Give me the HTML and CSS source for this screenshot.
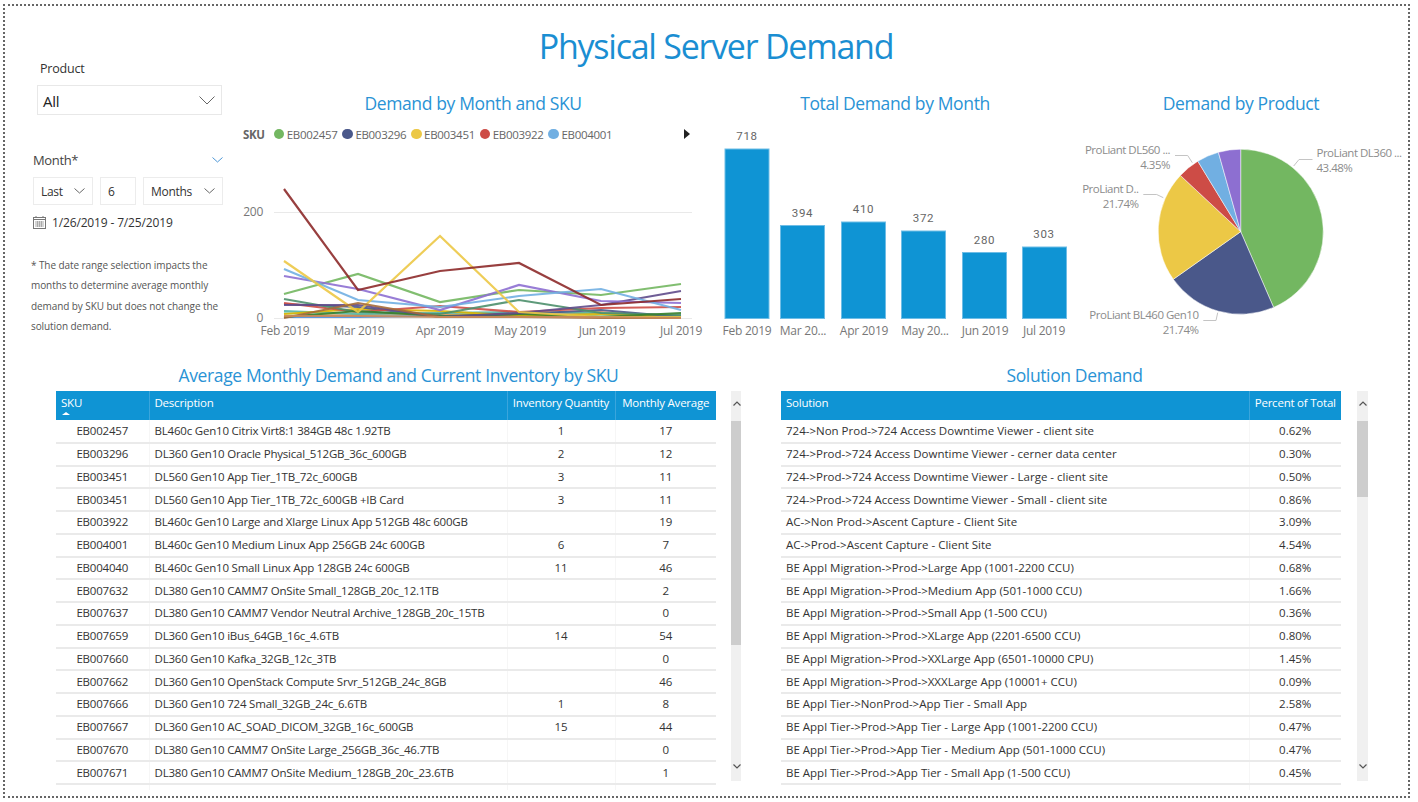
FILE: index.html
```html
<!DOCTYPE html>
<html lang="en">
<head>
    <meta charset="UTF-8">
    <meta name="viewport" content="width=device-width, initial-scale=1.0">
    <title>Physical Server Demand</title>
    <link rel="stylesheet" href="styles.css">
</head>
<body>
<div class="report">
    <div class="top">
        <div class="slicers">
            <div class="slicer-label">Product</div>
            <div class="dropdown">
                <span>All</span>
                <svg width="16" height="9" viewBox="0 0 16 9"><polyline points="0.5,0.5 8,8 15.5,0.5" class="chev"/></svg>
            </div>
            <div class="month-head">
                <span>Month*</span>
                <svg width="11" height="6" viewBox="0 0 11 6"><polyline points="0.5,0.5 5.5,5 10.5,0.5" class="chev-blue"/></svg>
            </div>
            <div class="month-inputs">
                <div class="box box-last"><span>Last</span><svg width="11" height="6" viewBox="0 0 11 6"><polyline points="0.5,0.5 5.5,5 10.5,0.5" class="chev"/></svg></div>
                <div class="box box-num"><span>6</span></div>
                <div class="box box-unit"><span>Months</span><svg width="11" height="6" viewBox="0 0 11 6"><polyline points="0.5,0.5 5.5,5 10.5,0.5" class="chev"/></svg></div>
            </div>
            <div class="date-range">
                <svg width="13" height="13" viewBox="0 0 13 13" class="cal">
                    <rect x="0.5" y="1.5" width="12" height="11" fill="none" stroke="#777"/>
                    <line x1="0.5" y1="3.5" x2="12.5" y2="3.5" stroke="#777"/>
                    <line x1="3" y1="0" x2="3" y2="2" stroke="#777"/>
                    <line x1="10" y1="0" x2="10" y2="2" stroke="#777"/>
                    <path d="M2 6h9M2 8h9M2 10h9M4.500 5v6M6.500 5v6M8.500 5v6" stroke="#aaa" fill="none"/>
                </svg>
                <span>1/26/2019 - 7/25/2019</span>
            </div>
            <p class="note">* The date range selection impacts the months to determine average monthly demand by SKU but does not change the solution demand.</p>
        </div>

        <div class="top-main">
            <h1>Physical Server Demand</h1>
            <div class="charts">
                <div class="chart chart-line">
                    <div class="chart-title">Demand by Month and SKU</div>
                    <div class="legend">
                        <b>SKU</b>
                        <div class="legend-item"><i class="dot dot-green"></i>EB002457</div>
                        <div class="legend-item"><i class="dot dot-navy"></i>EB003296</div>
                        <div class="legend-item"><i class="dot dot-yellow"></i>EB003451</div>
                        <div class="legend-item"><i class="dot dot-red"></i>EB003922</div>
                        <div class="legend-item"><i class="dot dot-blue"></i>EB004001</div>
                        <div class="legend-next"></div>
                    </div>
                    <svg class="plot" width="466" height="201" viewBox="240 144 466 201">
                        <line x1="274" y1="212.500" x2="692" y2="212.500" class="grid"/>
                        <line x1="274" y1="318.500" x2="692" y2="318.500" class="grid"/>
                        <text x="263" y="216" class="axis" text-anchor="end">200</text>
                        <text x="263" y="322" class="axis" text-anchor="end">0</text>
                        <text x="285" y="335" class="axis" text-anchor="middle">Feb 2019</text>
                        <text x="359" y="335" class="axis" text-anchor="middle">Mar 2019</text>
                        <text x="440" y="335" class="axis" text-anchor="middle">Apr 2019</text>
                        <text x="520" y="335" class="axis" text-anchor="middle">May 2019</text>
                        <text x="602" y="335" class="axis" text-anchor="middle">Jun 2019</text>
                        <text x="681" y="335" class="axis" text-anchor="middle">Jul 2019</text>

                        <g class="lines">
                            <polyline stroke="#95dabb" points="284,313 358,316 440,316 519,315 601,316 681,316"/>
                            <polyline stroke="#ee9e64" points="284,316 358,315 440,314 519,316 601,312 681,317"/>
                            <polyline stroke="#4a8ddc" points="284,317 358,317 440,316 519,317 601,317 681,317"/>
                            <polyline stroke="#54b5a5" points="284,311 358,314 440,313 519,312 601,313 681,316"/>
                            <polyline stroke="#d9b300" points="284,314 358,309 440,311 519,316 601,314 681,317"/>
                            <polyline stroke="#4a588a" points="284,304 358,307 440,317 519,314 601,310 681,317"/>
                            <polyline stroke="#cd4c46" points="284,303 358,312 440,306 519,312 601,308 681,307"/>
                            <polyline stroke="#4c8f6b" points="284,299 358,312 440,314 519,300 601,313 681,315"/>
                            <polyline stroke="#3a7f2e" points="284,317 358,311 440,316 519,314 601,317 681,313"/>
                            <polyline stroke="#5f4b8b" points="284,305 358,305 440,317 519,313 601,305 681,291"/>
                            <polyline stroke="#73b761" points="284,294 358,274 440,302 519,290 601,295 681,284"/>
                            <polyline stroke="#8d6fd1" points="284,276 358,289 440,310 519,285 601,301 681,303"/>
                            <polyline stroke="#71afe2" points="284,269 358,300 440,307 519,296 601,289 681,310"/>
                            <polyline stroke="#ecc846" points="284,261 358,312 440,236 519,312 601,317 681,317"/>
                            <polyline stroke="#8d2a2a" points="284,189 358,290 440,271 519,263 601,305 681,299"/>
                            <polyline stroke="#a66b3a" points="284,318 358,303 440,317 519,317 601,318 681,318"/>
                            <polyline stroke="#c98a5a" points="284,316 358,316 440,317 519,317 601,317 681,318"/>
                        </g>
                    </svg>
                </div>

                <div class="chart chart-bar">
                    <div class="chart-title">Total Demand by Month</div>
                    <svg class="plot" width="360" height="229" viewBox="715 116 360 229">
                        <g class="bars">
                            <rect x="725" y="149" width="44" height="169.500"/>
                            <rect x="780.500" y="225.500" width="44" height="93"/>
                            <rect x="841.500" y="222" width="44" height="96.500"/>
                            <rect x="901.500" y="231" width="44" height="87.500"/>
                            <rect x="962.500" y="252.500" width="44" height="66"/>
                            <rect x="1022.500" y="247" width="44" height="71.500"/>
                        </g>
                        <text x="747" y="140" class="value">718</text>
                        <text x="802.500" y="217" class="value">394</text>
                        <text x="863.500" y="213" class="value">410</text>
                        <text x="923.500" y="222" class="value">372</text>
                        <text x="984.500" y="244" class="value">280</text>
                        <text x="1044" y="238" class="value">303</text>
                        <text x="747" y="335" class="axis" text-anchor="middle">Feb 2019</text>
                        <text x="803" y="335" class="axis" text-anchor="middle">Mar 20...</text>
                        <text x="864" y="335" class="axis" text-anchor="middle">Apr 2019</text>
                        <text x="925" y="335" class="axis" text-anchor="middle">May 20...</text>
                        <text x="985" y="335" class="axis" text-anchor="middle">Jun 2019</text>
                        <text x="1044" y="335" class="axis" text-anchor="middle">Jul 2019</text>
                    </svg>
                </div>

                <div class="chart chart-pie">
                    <div class="chart-title">Demand by Product</div>
                    <svg class="plot" width="332" height="229" viewBox="1075 116 332 229">
                        <g class="slices">
                            <path fill="#73b761" d="M1240.700 231.700 L1240.700 149.200 A82.500 82.500 0 0 1 1273.600 307.400 Z"/>
                            <path fill="#4a588a" d="M1240.700 231.700 L1273.600 307.400 A82.500 82.500 0 0 1 1173.300 279.300 Z"/>
                            <path fill="#ecc846" d="M1240.700 231.700 L1173.300 279.300 A82.500 82.500 0 0 1 1180.400 175.400 Z"/>
                            <path fill="#cd4c46" d="M1240.700 231.700 L1180.400 175.400 A82.500 82.500 0 0 1 1197.800 161.200 Z"/>
                            <path fill="#71afe2" d="M1240.700 231.700 L1197.800 161.200 A82.500 82.500 0 0 1 1218.400 152.300 Z"/>
                            <path fill="#8d6fd1" d="M1240.700 231.700 L1218.400 152.300 A82.500 82.500 0 0 1 1240.700 149.200 Z"/>
                        </g>
                        <g class="leaders">
                            <polyline points="1293.700,166 1299,159.500 1312.500,159.500"/>
                            <polyline points="1175,155.500 1187.700,155.500 1192.300,162.700"/>
                            <polyline points="1143.300,194.500 1156.700,194.500 1163.300,197.700"/>
                            <polyline points="1203.300,320.500 1216,320.500 1217.700,312.700"/>
                        </g>
                        <text x="1316.500" y="157" class="pie-label">ProLiant DL360 ...</text>
                        <text x="1316.500" y="172" class="pie-label">43.48%</text>
                        <text x="1170" y="154" class="pie-label" text-anchor="end">ProLiant DL560 ...</text>
                        <text x="1170" y="169" class="pie-label" text-anchor="end">4.35%</text>
                        <text x="1138.500" y="193" class="pie-label" text-anchor="end">ProLiant D..</text>
                        <text x="1138.500" y="208" class="pie-label" text-anchor="end">21.74%</text>
                        <text x="1198.500" y="319" class="pie-label" text-anchor="end">ProLiant BL460 Gen10</text>
                        <text x="1198.500" y="334" class="pie-label" text-anchor="end">21.74%</text>
                    </svg>
                </div>
            </div>
        </div>
    </div>

    <div class="tables">
        <div class="panel panel-sku">
            <div class="chart-title">Average Monthly Demand and Current Inventory by SKU</div>
            <div class="panel-body">
                <div class="table-clip table-sku">
                    <table>
                        <colgroup><col class="c-sku"><col class="c-desc"><col class="c-inv"><col class="c-avg"></colgroup>
                        <thead>
                            <tr><th class="sorted">SKU<i class="sort-up"></i></th><th>Description</th><th class="mid">Inventory Quantity</th><th class="mid">Monthly Average</th></tr>
                        </thead>
                        <tbody>
                            <tr><td class="mid">EB002457</td><td>BL460c Gen10 Citrix Virt8:1 384GB 48c 1.92TB</td><td class="mid">1</td><td class="mid">17</td></tr>
                            <tr><td class="mid">EB003296</td><td>DL360 Gen10 Oracle Physical_512GB_36c_600GB</td><td class="mid">2</td><td class="mid">12</td></tr>
                            <tr><td class="mid">EB003451</td><td>DL560 Gen10 App Tier_1TB_72c_600GB</td><td class="mid">3</td><td class="mid">11</td></tr>
                            <tr><td class="mid">EB003451</td><td>DL560 Gen10 App Tier_1TB_72c_600GB +IB Card</td><td class="mid">3</td><td class="mid">11</td></tr>
                            <tr><td class="mid">EB003922</td><td>BL460c Gen10 Large and Xlarge Linux App 512GB 48c 600GB</td><td class="mid"></td><td class="mid">19</td></tr>
                            <tr><td class="mid">EB004001</td><td>BL460c Gen10 Medium Linux App 256GB 24c 600GB</td><td class="mid">6</td><td class="mid">7</td></tr>
                            <tr><td class="mid">EB004040</td><td>BL460c Gen10 Small Linux App 128GB 24c 600GB</td><td class="mid">11</td><td class="mid">46</td></tr>
                            <tr><td class="mid">EB007632</td><td>DL380 Gen10 CAMM7 OnSite Small_128GB_20c_12.1TB</td><td class="mid"></td><td class="mid">2</td></tr>
                            <tr><td class="mid">EB007637</td><td>DL380 Gen10 CAMM7 Vendor Neutral Archive_128GB_20c_15TB</td><td class="mid"></td><td class="mid">0</td></tr>
                            <tr><td class="mid">EB007659</td><td>DL360 Gen10 iBus_64GB_16c_4.6TB</td><td class="mid">14</td><td class="mid">54</td></tr>
                            <tr><td class="mid">EB007660</td><td>DL360 Gen10 Kafka_32GB_12c_3TB</td><td class="mid"></td><td class="mid">0</td></tr>
                            <tr><td class="mid">EB007662</td><td>DL360 Gen10 OpenStack Compute Srvr_512GB_24c_8GB</td><td class="mid"></td><td class="mid">46</td></tr>
                            <tr><td class="mid">EB007666</td><td>DL360 Gen10 724 Small_32GB_24c_6.6TB</td><td class="mid">1</td><td class="mid">8</td></tr>
                            <tr><td class="mid">EB007667</td><td>DL360 Gen10 AC_SOAD_DICOM_32GB_16c_600GB</td><td class="mid">15</td><td class="mid">44</td></tr>
                            <tr><td class="mid">EB007670</td><td>DL380 Gen10 CAMM7 OnSite Large_256GB_36c_46.7TB</td><td class="mid"></td><td class="mid">0</td></tr>
                            <tr><td class="mid">EB007671</td><td>DL380 Gen10 CAMM7 OnSite Medium_128GB_20c_23.6TB</td><td class="mid"></td><td class="mid">1</td></tr>
                            <tr><td class="mid">EB007672</td><td>DL380 Gen10 CAMM7 OnSite XLarge_384GB_36c_93.3TB</td><td class="mid"></td><td class="mid">1</td></tr>
                        </tbody>
                    </table>
                </div>
                <div class="scrollbar sb-sku">
                    <svg width="8" height="5" viewBox="0 0 8 5" class="sb-arrow"><polyline points="0.5,4.500 4,1 7.500,4.500" class="chev-dark"/></svg>
                    <div class="thumb thumb-sku"></div>
                    <svg width="8" height="5" viewBox="0 0 8 5" class="sb-arrow sb-down"><polyline points="0.5,0.5 4,4 7.500,0.5" class="chev-dark"/></svg>
                </div>
            </div>
        </div>

        <div class="panel panel-solution">
            <div class="chart-title">Solution Demand</div>
            <div class="panel-body">
                <div class="table-clip table-solution">
                    <table>
                        <colgroup><col class="c-sol"><col class="c-pct"></colgroup>
                        <thead>
                            <tr><th>Solution</th><th class="mid">Percent of Total</th></tr>
                        </thead>
                        <tbody>
                            <tr><td>724-&gt;Non Prod-&gt;724 Access Downtime Viewer - client site</td><td class="mid">0.62%</td></tr>
                            <tr><td>724-&gt;Prod-&gt;724 Access Downtime Viewer - cerner data center</td><td class="mid">0.30%</td></tr>
                            <tr><td>724-&gt;Prod-&gt;724 Access Downtime Viewer - Large - client site</td><td class="mid">0.50%</td></tr>
                            <tr><td>724-&gt;Prod-&gt;724 Access Downtime Viewer - Small - client site</td><td class="mid">0.86%</td></tr>
                            <tr><td>AC-&gt;Non Prod-&gt;Ascent Capture - Client Site</td><td class="mid">3.09%</td></tr>
                            <tr><td>AC-&gt;Prod-&gt;Ascent Capture - Client Site</td><td class="mid">4.54%</td></tr>
                            <tr><td>BE Appl Migration-&gt;Prod-&gt;Large App (1001-2200 CCU)</td><td class="mid">0.68%</td></tr>
                            <tr><td>BE Appl Migration-&gt;Prod-&gt;Medium App (501-1000 CCU)</td><td class="mid">1.66%</td></tr>
                            <tr><td>BE Appl Migration-&gt;Prod-&gt;Small App (1-500 CCU)</td><td class="mid">0.36%</td></tr>
                            <tr><td>BE Appl Migration-&gt;Prod-&gt;XLarge App (2201-6500 CCU)</td><td class="mid">0.80%</td></tr>
                            <tr><td>BE Appl Migration-&gt;Prod-&gt;XXLarge App (6501-10000 CPU)</td><td class="mid">1.45%</td></tr>
                            <tr><td>BE Appl Migration-&gt;Prod-&gt;XXXLarge App (10001+ CCU)</td><td class="mid">0.09%</td></tr>
                            <tr><td>BE Appl Tier-&gt;NonProd-&gt;App Tier - Small App</td><td class="mid">2.58%</td></tr>
                            <tr><td>BE Appl Tier-&gt;Prod-&gt;App Tier - Large App (1001-2200 CCU)</td><td class="mid">0.47%</td></tr>
                            <tr><td>BE Appl Tier-&gt;Prod-&gt;App Tier - Medium App (501-1000 CCU)</td><td class="mid">0.47%</td></tr>
                            <tr><td>BE Appl Tier-&gt;Prod-&gt;App Tier - Small App (1-500 CCU)</td><td class="mid">0.45%</td></tr>
                            <tr><td>BE Appl Tier-&gt;Production-&gt;Tier - XLarge App (2201-6500 CCU)</td><td class="mid">1.42%</td></tr>
                        </tbody>
                    </table>
                </div>
                <div class="scrollbar sb-solution">
                    <svg width="8" height="5" viewBox="0 0 8 5" class="sb-arrow"><polyline points="0.5,4.500 4,1 7.500,4.500" class="chev-dark"/></svg>
                    <div class="thumb thumb-solution"></div>
                    <svg width="8" height="5" viewBox="0 0 8 5" class="sb-arrow sb-down"><polyline points="0.5,0.5 4,4 7.500,0.5" class="chev-dark"/></svg>
                </div>
            </div>
        </div>
    </div>
</div>
</body>
</html>
```

FILE: styles.css
```css
* {
    box-sizing: border-box;
}
body {
    margin: 0;
    background: #fff;
    font-family: "Open Sans", "Noto Sans", sans-serif;
    color: #333;
}
.report {
    width: 1407px;
    height: 794px;
    margin: 4px 0 0 3px;
    border: 2px dotted #666;
    overflow: hidden;
}

/* top part */
.top {
    display: flex;
    height: 358px;
}
.slicers {
    width: 235px;
    padding: 54px 0 0 28px;
    flex: none;
}
.slicer-label {
    margin-left: 7px;
    height: 18px;
    font-size: 12.5px;
    line-height: 18px;
    letter-spacing: -0.2px;
    color: #333;
}
.dropdown {
    display: flex;
    align-items: center;
    justify-content: space-between;
    width: 185px;
    height: 30px;
    margin: 7px 0 0 4px;
    padding: 1px 6px 0 5px;
    border: 1px solid #e8e8e8;
    font-size: 15px;
    letter-spacing: -0.3px;
    color: #222;
}
.chev, .chev-blue, .chev-dark {
    fill: none;
    stroke: #666;
    stroke-width: 1;
}
.chev-blue {
    stroke: #4d97d6;
}
.chev-dark {
    stroke: #555;
    stroke-width: 1.2;
}
.month-head {
    display: flex;
    align-items: center;
    justify-content: space-between;
    width: 190px;
    height: 18px;
    margin-top: 36px;
    font-size: 13px;
    letter-spacing: -0.35px;
    color: #444;
}
.month-inputs {
    display: flex;
    gap: 7px;
    width: 190px;
    margin-top: 8px;
}
.box {
    display: flex;
    align-items: center;
    justify-content: space-between;
    height: 28px;
    padding: 0 7px;
    border: 1px solid #ececec;
    font-size: 12px;
    letter-spacing: -0.3px;
    color: #333;
}
.box-last {
    width: 60px;
}
.box-num {
    width: 36px;
}
.box-unit {
    width: 80px;
}
.date-range {
    display: flex;
    align-items: center;
    gap: 6px;
    height: 16px;
    margin-top: 9px;
    font-size: 12px;
    letter-spacing: -0.15px;
    color: #333;
}
.note {
    width: 200px;
    margin: 25px 0 0 -2px;
    font-size: 10px;
    line-height: 20.4px;
    letter-spacing: -0.08px;
    color: #555;
}

.top-main {
    flex: 1;
    min-width: 0;
}
h1 {
    height: 86px;
    margin: 0;
    padding: 18px 216px 0 0;
    font-size: 34px;
    font-weight: 400;
    line-height: 44px;
    letter-spacing: -1.25px;
    text-align: center;
    color: #1a8ed2;
}
.charts {
    display: flex;
}
.chart-title {
    height: 24px;
    font-size: 17.500px;
    line-height: 22px;
    letter-spacing: -0.37px;
    text-align: center;
    color: #2a93d5;
}
.chart-line {
    width: 466px;
    margin-right: 9px;
}
.chart-bar {
    width: 360px;
}
.chart-pie {
    width: 332px;
}
.plot {
    display: block;
}
.legend {
    display: flex;
    align-items: center;
    height: 20px;
    margin-top: 8px;
    padding-left: 3px;
    font-size: 11.500px;
    letter-spacing: -0.3px;
    color: #666;
}
.legend b {
    width: 30.700px;
    letter-spacing: -0.4px;
    font-weight: 700;
    flex: none;
}
.legend-item {
    display: flex;
    align-items: center;
    gap: 2.500px;
    width: 68.700px;
    flex: none;
}
.dot {
    width: 10.500px;
    height: 10.500px;
    border-radius: 50%;
    flex: none;
}
.dot-green { background: #73b761; }
.dot-navy { background: #4a588a; }
.dot-yellow { background: #ecc846; }
.dot-red { background: #cd4c46; }
.dot-blue { background: #71afe2; }
.legend-next {
    width: 0;
    height: 0;
    margin-left: auto;
    margin-right: 16px;
    border-left: 6px solid #222;
    border-top: 5.500px solid transparent;
    border-bottom: 5.500px solid transparent;
}
.grid {
    stroke: #e9e9e9;
    stroke-width: 1;
}
.axis {
    font-size: 12px;
    letter-spacing: -0.25px;
    fill: #777;
}
.lines polyline {
    fill: none;
    stroke-width: 2.2;
    stroke-opacity: 0.9;
}
.bars rect {
    fill: #0f94d4;
    stroke: #6fbde6;
    stroke-width: 1;
}
.value {
    font-family: Roboto, sans-serif;
    font-size: 11.500px;
    font-weight: 400;
    letter-spacing: 0.7px;
    text-anchor: middle;
    fill: #666;
}
.slices path {
    stroke: #fff;
    stroke-width: 0.5;
}
.leaders polyline {
    fill: none;
    stroke: #c4c4c4;
    stroke-width: 1;
}
.pie-label {
    font-size: 11.500px;
    letter-spacing: -0.5px;
    fill: #8c8c8c;
}

/* tables */
.tables {
    display: flex;
    gap: 40px;
    padding-left: 51px;
}
.panel-sku {
    width: 685px;
}
.panel-solution {
    width: 587px;
}
.panel-body {
    display: flex;
    justify-content: space-between;
    margin-top: 3px;
}
.table-clip {
    height: 399px;
    overflow: hidden;
}
.table-sku {
    width: 660px;
}
.table-solution {
    width: 560px;
}
table {
    width: 100%;
    border-collapse: collapse;
    table-layout: fixed;
    font-size: 11.500px;
    letter-spacing: -0.2px;
}
.table-solution table {
    letter-spacing: 0;
}
.c-sku { width: 93px; }
.c-inv { width: 108px; }
.c-avg { width: 101px; }
.c-pct { width: 92px; }
th {
    position: relative;
    height: 29px;
    padding: 5px 5px 0;
    background: #0f94d4;
    border-left: 1px solid #3aa5dc;
    font-size: 11.500px;
    font-weight: 400;
    line-height: 14px;
    letter-spacing: -0.22px;
    text-align: left;
    vertical-align: top;
    color: #fff;
}
th:first-child {
    border-left: 0;
}
td {
    height: 22.750px;
    padding: 0 5px;
    border-bottom: 2px solid #eaeaea;
    border-left: 1px solid #f6f6f6;
    line-height: 14px;
    white-space: nowrap;
    overflow: hidden;
    color: #333;
}
td:first-child {
    border-left: 0;
}
.mid {
    text-align: center;
}
.sort-up {
    position: absolute;
    left: 6px;
    top: 21px;
    border-left: 4px solid transparent;
    border-right: 4px solid transparent;
    border-bottom: 3px solid #fff;
}
.scrollbar {
    position: relative;
    height: 390px;
    background: #f0f0f0;
}
.sb-sku {
    width: 10px;
}
.sb-solution {
    width: 11px;
}
.sb-arrow {
    position: absolute;
    left: 1.500px;
    top: 10px;
}
.sb-down {
    top: auto;
    bottom: 12px;
}
.thumb {
    position: absolute;
    left: 0;
    right: 0;
    top: 30px;
    background: #cdcdcd;
}
.thumb-sku {
    height: 224px;
}
.thumb-solution {
    height: 76px;
}
```
